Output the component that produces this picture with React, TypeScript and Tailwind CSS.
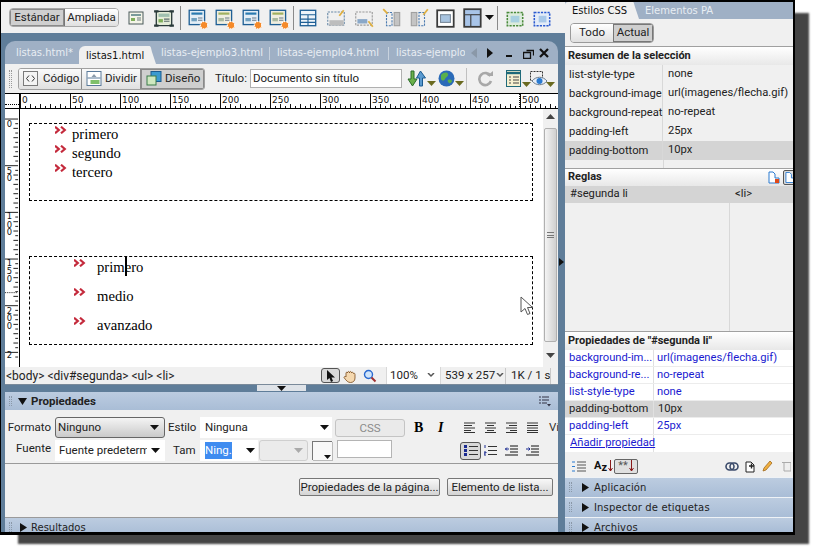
import type { ReactNode } from "react";

// dashed-outline icons used in the top toolbar
const Ico = ({ children, w = 20, h = 20 }: { children: ReactNode; w?: number; h?: number }) => (
  <svg width={w} height={h} viewBox="0 0 20 20" className="shrink-0">
    {children}
  </svg>
);

const Caret = ({ color = "#111" }: { color?: string }) => (
  <svg width="9" height="5" viewBox="0 0 9 5" className="shrink-0">
    <path d="M0 0h9L4.5 5z" fill={color} />
  </svg>
);

const ToolSep = () => <div className="h-[24px] w-px bg-[#8a8a8a] shrink-0" />;

const PageIcon = () => (
  <Ico>
    <rect x="3" y="4" width="14" height="12" fill="#f4f4e8" stroke="#4a5a5a" />
    <rect x="5" y="6" width="10" height="2" fill="#7a9a9a" />
    <rect x="5" y="10" width="4" height="3" fill="#7fae5a" />
    <path d="M11 10h4M11 12h4" stroke="#6a7a7a" />
  </Ico>
);

const FrameIcon = () => (
  <Ico w={22} h={22}>
    <path d="M3 4h14v13H3z" fill="#e4ecd8" stroke="#2a3a3a" strokeWidth="1.2" />
    <path d="M1 4h4M15 4h4M1 17h4M15 17h4" stroke="#2a3a3a" strokeWidth="2" />
    <path d="M5 6h10v3H5z" fill="#9fc0b0" />
    <path d="M5 11h4v3H5z" fill="#7fae5a" />
    <path d="M10 11h5M10 13h5" stroke="#5a6a6a" />
  </Ico>
);

const TemplateIcon = ({ v }: { v: number }) => (
  <Ico w={22} h={22}>
    <rect x="2" y="3" width="14" height="13" fill={v % 2 ? "#f0eee0" : "#e4eef6"} stroke="#1f5f95" strokeWidth="1.2" />
    <path d="M4 6h10" stroke={v % 2 ? "#a0b060" : "#2a7ab0"} strokeWidth="2" />
    <path d="M4 10h5v3H4z" fill={v % 2 ? "#a9b9a0" : "#70a0c0"} />
    <path d="M10 10h4M10 12h4" stroke="#6a7a8a" />
    <circle cx="15.5" cy="16.5" r="3.4" fill="#f58a2a" stroke="#fff" strokeWidth="1" strokeDasharray="1.6 .8" />
  </Ico>
);

const DashBox = ({ color = "#4a7ab0", children }: { color?: string; children?: ReactNode }) => (
  <Ico w={22} h={22}>
    <rect x="2.5" y="4.5" width="15" height="12" fill="none" stroke={color} strokeDasharray="2 1" />
    {children}
  </Ico>
);

const MainToolbar = () => (
  <div className="h-[31px] bg-[#f0f0f0] flex items-center pl-[8px] shrink-0">
    <div className="flex h-[19px] w-[110px] rounded-[4px] border border-[#a8a8a8] overflow-hidden text-[11.5px] shrink-0">
      <div className="w-[55px] bg-[#cfcfcf] border-r border-[#777] shadow-[inset_0_0_0_1px_#8a8a8a] flex items-center justify-center">Estándar</div>
      <div className="flex-1 bg-gradient-to-b from-white to-[#e0e0e0] flex items-center justify-center">Ampliada</div>
    </div>
    <div className="ml-[7px]"><PageIcon /></div>
    <div className="ml-[7px]"><FrameIcon /></div>
    <div className="ml-[5px]"><ToolSep /></div>
    <div className="ml-[6px] flex gap-[5px]">
      {[0, 1, 2, 3].map((v) => (
        <TemplateIcon key={v} v={v} />
      ))}
    </div>
    <div className="ml-[3px]"><ToolSep /></div>
    <div className="ml-[3px]">
      <Ico w={22} h={22}>
        <rect x="3" y="3" width="14" height="14" fill="#eef4fa" stroke="#1f5f95" strokeWidth="1.2" />
        <path d="M3 7h14M3 11h14M3 14h14M10 7v10" stroke="#1f5f95" />
      </Ico>
    </div>
    <div className="ml-[6px]">
      <DashBox color="#6a8aa8"><path d="M4 12h13v5H4z" fill="#bdbdbd" /><path d="M13 8l4-5" stroke="#e0b040" strokeWidth="1.6" /></DashBox>
    </div>
    <div className="ml-[6px]">
      <DashBox color="#9a9a9a"><path d="M4 11h9v4H4z" fill="#8aa8c8" /><path d="M14 13l4 5" stroke="#e0b040" strokeWidth="1.6" /></DashBox>
    </div>
    <div className="ml-[6px]">
      <Ico w={22} h={22}>
        <rect x="5" y="5" width="5" height="12" fill="none" stroke="#4a7ab0" strokeDasharray="2 1" />
        <rect x="12" y="5" width="5" height="12" fill="#c4c4c4" stroke="#a0a0a0" />
        <path d="M2 2l4 4" stroke="#e0b040" strokeWidth="1.6" />
      </Ico>
    </div>
    <div className="ml-[5px]">
      <Ico w={22} h={22}>
        <rect x="3" y="5" width="5" height="12" fill="#c4c4c4" stroke="#a0a0a0" />
        <rect x="10" y="5" width="5" height="12" fill="none" stroke="#4a7ab0" strokeDasharray="2 1" />
        <path d="M14 7l4-5" stroke="#e0b040" strokeWidth="1.6" />
      </Ico>
    </div>
    <div className="ml-[5px]">
      <Ico w={22} h={22}>
        <rect x="2" y="3" width="15" height="15" fill="#fff" stroke="#3a3a3a" strokeWidth="1.6" />
        <rect x="5" y="7" width="9" height="7" fill="#a8c4e0" stroke="#7a8a9a" />
      </Ico>
    </div>
    <div className="ml-[5px]">
      <Ico w={22} h={22}>
        <rect x="2" y="2" width="15" height="16" fill="#a8c4e8" stroke="#3a3a3a" strokeWidth="1.6" />
        <path d="M2 7h6v11" fill="none" stroke="#3a3a3a" />
        <path d="M8 7h9" stroke="#3a3a3a" />
      </Ico>
    </div>
    <div className="ml-[1px]"><Caret /></div>
    <div className="ml-[3px]"><ToolSep /></div>
    <div className="ml-[6px]">
      <Ico w={22} h={22}>
        <rect x="3" y="5" width="14" height="12" fill="#dcecdc" stroke="#4a8a3a" strokeDasharray="2 1" strokeWidth="1.4" />
        <rect x="6" y="8" width="8" height="6" fill="#a8d0e0" />
      </Ico>
    </div>
    <div className="ml-[5px]">
      <Ico w={22} h={22}>
        <rect x="3" y="5" width="14" height="12" fill="#e4ecf8" stroke="#2a5ad0" strokeDasharray="2 1" strokeWidth="1.4" />
        <rect x="7" y="8" width="7" height="6" fill="#a8c8e8" />
      </Ico>
    </div>
  </div>
);

const tabText = "font-['DejaVu_Sans',sans-serif] text-[10px] whitespace-nowrap shrink-0";

const DocTabs = () => (
  <div className="h-[23px] bg-[#9fb0c5] rounded-t-[10px] flex items-end shrink-0 overflow-hidden relative">
    <span className={tabText + " ml-[11px] mb-[4px] text-[#e8edf3] w-[63px]"}>listas.html*</span>
    <div className="w-[70px] h-[18px] bg-[#f0f0f0] rounded-tl-[6px] flex items-center pl-[7px] shrink-0">
      <span className={tabText + " text-[#111]"}>listas1.html</span>
    </div>
    <svg width="7" height="18" viewBox="0 0 7 18" className="shrink-0"><path d="M0 0c2 0 2 2 3 6l4 12H0z" fill="#f0f0f0" /></svg>
    <span className={tabText + " ml-[5px] mb-[4px] text-[#e8edf3] w-[108px]"}>listas-ejemplo3.html</span>
    <div className="w-px h-[13px] bg-[#c8d2de] mb-[4px] shrink-0" />
    <span className={tabText + " ml-[7px] mb-[4px] text-[#e8edf3] w-[111px]"}>listas-ejemplo4.html</span>
    <div className="w-px h-[13px] bg-[#c8d2de] mb-[4px] shrink-0" />
    <span className={tabText + " ml-[7px] mb-[4px] text-[#e8edf3] w-[69px] overflow-hidden"}>listas-ejemplo5.html</span>
    <div className="ml-[5px] mb-[3px] flex items-center h-[16px] shrink-0">
      <svg width="8" height="10" viewBox="0 0 8 10"><path d="M7 0v10L1 5z" fill="#8a98a8" /></svg>
      <svg width="8" height="10" viewBox="0 0 8 10" className="ml-[8px]"><path d="M1 0v10l6-5z" fill="#111" /></svg>
      <svg width="10" height="10" viewBox="0 0 10 10" className="ml-[10px]"><path d="M2 7h6v2H2z" fill="#111" /></svg>
      <svg width="11" height="11" viewBox="0 0 11 11" className="ml-[9px]">
        <path d="M3.5 2.5h7v5M.5 4.5h7v6h-7z" fill="none" stroke="#111" strokeWidth="1.3" />
      </svg>
      <svg width="10" height="10" viewBox="0 0 10 10" className="ml-[5px]"><path d="M1 1l8 8M9 1L1 9" stroke="#111" strokeWidth="2.2" /></svg>
    </div>
  </div>
);

const DocToolbar = () => (
  <div className="h-[29px] bg-[#f0f0f0] flex items-center shrink-0 relative">
    <div className="ml-[4px] w-[3px] h-[18px] border-x border-dotted border-[#9a9a9a] shrink-0" />
    <div className="ml-[6px] flex h-[22px] w-[187px] rounded-[3px] border border-[#a0a0a0] text-[11.5px] overflow-hidden shrink-0">
      <div className="w-[63px] bg-gradient-to-b from-[#fafafa] to-[#e0e0e0] border-r border-[#8a8a8a] flex items-center pl-[4px] gap-[5px] shrink-0">
        <svg width="15" height="15" viewBox="0 0 15 15" className="shrink-0">
          <rect x=".5" y=".5" width="14" height="14" fill="#f4f4f4" stroke="#7a7a7a" />
          <path d="M6 4.5L3.5 7.5 6 10.5M9 4.5l2.5 3-2.5 3" fill="none" stroke="#333" />
        </svg>
        Código
      </div>
      <div className="w-[59px] bg-gradient-to-b from-[#fafafa] to-[#e0e0e0] border-r border-[#8a8a8a] flex items-center pl-[4px] gap-[3px] shrink-0">
        <svg width="16" height="15" viewBox="0 0 15 15" className="shrink-0">
          <rect x=".5" y=".5" width="14" height="14" fill="#fff" stroke="#5a7a9a" />
          <path d="M1 7h13" stroke="#5a7a9a" />
          <path d="M5 6l2.5-3L10 6z" fill="#8a9aaa" />
          <path d="M4 9h9v4H4z" fill="#7fc06a" />
        </svg>
        Dividir
      </div>
      <div className="flex-1 bg-[#cfcfcf] shadow-[inset_0_0_0_1px_#8a8a8a] flex items-center pl-[5px] gap-[3px]">
        <svg width="16" height="15" viewBox="0 0 16 15" className="shrink-0">
          <rect x="5" y=".5" width="10" height="10" fill="#3a9ad0" stroke="#1a5a90" />
          <rect x="1" y="5" width="9" height="9" fill="#cfe8c0" stroke="#3a7a4a" />
        </svg>
        Diseño
      </div>
    </div>
    <span className="ml-[10px] text-[11.5px] w-[35px] shrink-0">Título:</span>
    <div className="w-[152px] h-[19px] bg-white border border-[#b0b0b0] text-[11.5px] leading-[17px] pl-[2px] shrink-0">Documento sin título</div>
    <div className="ml-[5px] w-[22px] flex items-center shrink-0">
      <svg width="19" height="17" viewBox="0 0 19 17">
        <path d="M5.5 16L1 9h3V1h3v8h3z" fill="#6ab04a" stroke="#2a6a2a" />
        <path d="M13.5 1L9.5 8h3v8h3V8h3z" fill="#5a9ad0" stroke="#1a5a90" />
      </svg>
    </div>
    <div className="mt-[10px] -ml-[2px]"><Caret color="#6a6a20" /></div>
    <div className="ml-[2px] flex items-center shrink-0">
      <svg width="17" height="17" viewBox="0 0 17 17">
        <circle cx="8.5" cy="8.5" r="8" fill="#2a6ab8" />
        <path d="M3 5c3-3 6-3 7-1s-2 3-3 5-3 2-4 0zM10 10c2-1 4 0 4 1s-2 3-3 2-2-2-1-3z" fill="#5ab04a" />
      </svg>
    </div>
    <div className="mt-[10px]"><Caret color="#6a6a20" /></div>
    <div className="ml-[2px] w-px h-[22px] bg-[#c0c0c0] shrink-0" />
    <svg width="17" height="17" viewBox="0 0 17 17" className="ml-[10px] shrink-0">
      <path d="M13.5 6A6 6 0 1 0 14 11" fill="none" stroke="#a8a8a8" strokeWidth="2.6" />
      <path d="M10 6h6V1z" fill="#a8a8a8" />
    </svg>
    <svg width="17" height="18" viewBox="0 0 17 18" className="ml-[12px] shrink-0">
      <rect x=".5" y=".5" width="14" height="16" fill="#f6f0d0" stroke="#1f6a7a" />
      <path d="M1 3h13" stroke="#1f6a7a" strokeWidth="2.4" />
      <path d="M3 7h2M7 7h6M3 10h2M7 10h6M3 13h2M7 13h6" stroke="#444" />
    </svg>
    <div className="mt-[12px] -ml-[1px]"><Caret color="#6a6a20" /></div>
    <svg width="20" height="18" viewBox="0 0 20 18" className="-ml-[2px] shrink-0">
      <rect x="1.5" y="1.5" width="12" height="9" fill="none" stroke="#333" strokeDasharray="2 1" />
      <path d="M3 11c4-5 11-5 15 0-4 5-11 5-15 0z" fill="#e8eef6" stroke="#6a7a8a" />
      <circle cx="10.5" cy="11" r="3" fill="#2a7ad0" />
    </svg>
    <div className="mt-[12px] -ml-[3px]"><Caret color="#6a6a20" /></div>
  </div>
);

const HRuler = () => {
  const ticks = Array.from({ length: 108 }, (_, i) => i * 5);
  return (
    <div className="h-[16px] bg-white border-y border-black flex shrink-0 overflow-hidden">
      <div className="w-[15px] h-full border-r border-black relative shrink-0">
        <div className="absolute left-0 right-0 bottom-[3px] border-b border-dotted border-black" />
      </div>
      <svg width="538" height="14" viewBox="0 0 538 14" className="shrink-0">
        {ticks.map((t) => {
          const h = t % 50 === 0 ? 14 : t % 10 === 0 ? 4 : 2;
          return <path key={t} d={`M${t + 0.5} ${14 - h}V14`} stroke="#111" />;
        })}
        <path d="M499.5 0V14" stroke="#111" strokeDasharray="1 1" />
        {[0, 50, 100, 150, 200, 250, 300, 350, 400, 450, 500].map((n) => (
          <text key={n} x={n + 2} y="9" fontSize="9" fontFamily="DejaVu Sans, sans-serif" fill="#111">
            {n}
          </text>
        ))}
      </svg>
    </div>
  );
};

const VRuler = () => {
  const ticks = Array.from({ length: 52 }, (_, i) => i * 5);
  const labels: [string, number][] = [
    ["0", 10], ["5", 60], ["0", 68], ["1", 109], ["0", 118], ["0", 126], ["1", 159], ["5", 168], ["0", 176],
    ["2", 210], ["0", 218], ["0", 227], ["2", 258],
  ];
  return (
    <svg width="15" height="259" viewBox="0 0 15 259" className="shrink-0 bg-white border-r border-black">
      {ticks.map((t) => {
        const w = t % 50 === 0 ? 14 : t % 10 === 0 ? 5 : 3;
        return <path key={t} d={`M${14 - w} ${t + 1.5}H14`} stroke="#111" />;
      })}
      <path d="M0 187.5H14" stroke="#fff" />
      <path d="M0 187.5H14" stroke="#111" strokeDasharray="1 1" />
      {labels.map(([s, y], i) => (
        <text key={i} x="2" y={y} fontSize="9" fontFamily="DejaVu Sans, sans-serif" fill="#111">
          {s}
        </text>
      ))}
    </svg>
  );
};

const Chevrons = () => (
  <svg width="12" height="8" viewBox="0 0 11 7" className="shrink-0">
    <path d="M0 .5l3.5 3L0 6.5M5.5 .5l3.5 3-3.5 3" fill="none" stroke="#c42a3c" strokeWidth="2" />
  </svg>
);

const Canvas = () => (
  <div className="flex-1 bg-white relative font-['Liberation_Serif',serif] text-[14.67px] text-black overflow-hidden">
    <div className="ml-[9px] mt-[14px] h-[78px] w-[504px] border border-dashed border-black pt-[1px]">
      <ul className="pl-[42px]">
        {["primero", "segundo", "tercero"].map((t) => (
          <li key={t} className="relative leading-[19px]">
            <span className="absolute top-[1px] -left-[17px]"><Chevrons /></span>
            {t}
          </li>
        ))}
      </ul>
    </div>
    <div className="ml-[9px] mt-[55px] h-[89px] w-[504px] border border-dashed border-black relative pt-[1px]">
      <ul className="pl-[67px]">
        {["primero", "medio", "avanzado"].map((t) => (
          <li key={t} className="relative leading-[19px] pb-[10px]">
            <span className="absolute top-[1px] -left-[23px]"><Chevrons /></span>
            {t}
          </li>
        ))}
      </ul>
      <div className="absolute left-[95px] top-0 w-[2px] h-[19px] bg-black" />
    </div>
    <svg width="14" height="20" viewBox="0 0 14 20" className="absolute left-[500px] top-[187px]">
      <path d="M1 1v15l4-3.5 2.5 6 2.5-1-2.5-6h5z" fill="#fff" stroke="#555" />
    </svg>
  </div>
);

const Scrollbar = () => (
  <div className="w-[15px] bg-[#f0f0f0] flex flex-col items-center shrink-0">
    <svg width="9" height="5" viewBox="0 0 9 5" className="mt-[5px]"><path d="M0 5h9L4.5 0z" fill="#444" /></svg>
    <div className="mt-[9px] h-[214px] w-[13px] rounded-[2px] bg-gradient-to-r from-[#f4f4f4] to-[#cfcfcf] border border-[#b0b0b0] flex items-center justify-center">
      <div className="w-[7px] h-[6px] border-y border-[#777] relative">
        <div className="absolute left-0 right-0 top-[1.5px] border-t border-[#777]" />
      </div>
    </div>
    <svg width="9" height="5" viewBox="0 0 9 5" className="mt-[11px]"><path d="M0 0h9L4.5 5z" fill="#444" /></svg>
  </div>
);

const StatusBar = () => (
  <div className="h-[17px] bg-[#f0f0f0] flex items-center text-[12px] shrink-0 text-[#222]">
    <span className="ml-[1px]">{"<body> <div#segunda> <ul> <li>"}</span>
    <div className="ml-auto flex items-center text-[11.5px]">
      <div className="w-[19px] h-[15px] border border-[#555] rounded-[3px] bg-[#d8d8d8] flex items-center justify-center">
        <svg width="9" height="12" viewBox="0 0 9 12"><path d="M1 0v10l2.5-2 1.5 4 2-1-1.5-3.5H9z" fill="#111" /></svg>
      </div>
      <svg width="14" height="14" viewBox="0 0 14 14" className="ml-[3px]">
        <path d="M3 8V4c0-1 1.5-1 1.5 0 0-2 2-2 2 0 0-2 2-2 2 0 0-1 2-1 2 .5 1-.5 1.5 0 1.5 1V9c0 3-2 4.5-4.5 4.5S3.5 12 1 8.5c0-1 1.5-1.5 2-.5z" fill="#f4d8b0" stroke="#7a4a1a" strokeWidth=".8" />
      </svg>
      <svg width="14" height="14" viewBox="0 0 14 14" className="ml-[6px]">
        <circle cx="5.5" cy="5.5" r="4" fill="#cfe4fa" stroke="#2a6ad0" strokeWidth="1.4" />
        <path d="M8.5 8.5l4 4" stroke="#a03030" strokeWidth="2" />
      </svg>
      <div className="ml-[9px] w-[55px] h-[17px] bg-white border-x border-[#d8d8d8] flex items-center pl-[3px] justify-between pr-[5px]">
        100%
        <svg width="8" height="5" viewBox="0 0 8 5"><path d="M1 0l3 3 3-3" fill="none" stroke="#555" strokeWidth="1.5" /></svg>
      </div>
      <div className="ml-[4px] w-[60px] flex items-center gap-[1px] whitespace-nowrap">
        539 x 257
        <svg width="8" height="5" viewBox="0 0 8 5"><path d="M1 0l3 3 3-3" fill="none" stroke="#555" strokeWidth="1.5" /></svg>
      </div>
      <div className="h-[16px] w-px bg-[#c8c8c8]" />
      <span className="ml-[5px] w-[39px] whitespace-nowrap">1K / 1 s</span>
      <div className="h-[16px] w-px bg-[#c8c8c8]" />
      <div className="w-[7px]" />
    </div>
  </div>
);

const Grip = () => <div className="w-[3px] h-[10px] border-x border-dotted border-[#8a98a8] shrink-0" />;

const Tri = () => (
  <svg width="7" height="9" viewBox="0 0 7 9" className="shrink-0"><path d="M0 0l7 4.5L0 9z" fill="#111" /></svg>
);

const TriDown = () => (
  <svg width="9" height="7" viewBox="0 0 9 7" className="shrink-0"><path d="M0 0h9L4.5 7z" fill="#111" /></svg>
);

const panelHead = "bg-gradient-to-b from-[#bccce0] to-[#a9bdd6]";
const fieldSel = "h-[21px] bg-white flex items-center justify-between text-[11.5px] shrink-0";

const PropsPanel = () => (
  <div className="flex-1 flex flex-col bg-[#f0f0f0] min-h-0 overflow-hidden">
    <div className={"h-[18px] flex items-center pl-[4px] shrink-0 " + panelHead}>
      <Grip />
      <div className="ml-[6px]"><TriDown /></div>
      <span className="ml-[4px] font-bold text-[11.5px] relative top-[1px]">Propiedades</span>
      <svg width="12" height="11" viewBox="0 0 12 11" className="ml-auto mr-[7px]">
        <path d="M0 1h2M0 4h2M0 7h2M3 1h7M3 4h7M3 7h5" stroke="#334" />
        <path d="M8 8h4l-2 2.5z" fill="#334" />
      </svg>
    </div>
    <div className="h-[54px] border-b border-[#9a9a9a] shrink-0 pt-[7px] text-[11.5px] overflow-hidden">
      <div className="flex items-center h-[21px] whitespace-nowrap">
        <span className="w-[46px] text-right shrink-0">Formato</span>
        <div className="ml-[4px] w-[110px] h-[21px] rounded-[3px] border border-[#666] bg-gradient-to-b from-[#f4f4f4] to-[#cacaca] pl-[2px] pr-[5px] flex items-center justify-between shrink-0">
          Ninguno<Caret />
        </div>
        <span className="ml-[3px] w-[32px] shrink-0">Estilo</span>
        <div className={fieldSel + " w-[132px] pl-[5px] pr-[3px]"}>Ninguna<Caret /></div>
        <div className="ml-[3px] w-[70px] h-[18px] rounded-[3px] border border-[#c4c4c4] bg-[#eaeaea] text-[#8a8a8a] text-center leading-[16px] shrink-0">CSS</div>
        <span className="ml-[9px] font-['Liberation_Serif',serif] font-bold text-[14px] w-[24px] shrink-0 text-black">B</span>
        <span className="font-['Liberation_Serif',serif] font-bold italic text-[14px] w-[26px] shrink-0 text-black">I</span>
        {["l", "c", "r", "j"].map((a) => (
          <svg key={a} width="11" height="11" viewBox="0 0 11 11" className="mr-[10px] shrink-0">
            <path
              d={
                a === "l" ? "M0 1h11M0 3.5h8M0 6h11M0 8.5h7M0 10.5h11"
                : a === "c" ? "M0 1h11M2 3.5h7M0 6h11M2 8.5h7M0 10.5h11"
                : a === "r" ? "M0 1h11M3 3.5h8M0 6h11M4 8.5h7M0 10.5h11"
                : "M0 1h11M0 3.5h11M0 6h11M0 8.5h11M0 10.5h11"
              }
              stroke="#333"
            />
          </svg>
        ))}
        <span className="ml-[1px] text-[#333]">Vín</span>
      </div>
      <div className="flex items-center h-[21px] mt-[2px] whitespace-nowrap">
        <span className="w-[46px] text-right shrink-0 relative -top-[2px]">Fuente</span>
        <div className={fieldSel + " ml-[4px] w-[110px] pl-[4px] pr-[5px] overflow-hidden"}>
          <span className="w-[88px] overflow-hidden">Fuente predeterminada</span><Caret />
        </div>
        <span className="ml-[8px] w-[27px] shrink-0">Tam</span>
        <div className={fieldSel + " w-[58px] pl-[5px] pr-[3px]"}>
          <span className="bg-[#3f8cf0] text-white">Ning.</span><Caret />
        </div>
        <div className="ml-[1px] w-[49px] h-[21px] rounded-[3px] border border-[#cfcfcf] bg-[#ebebeb] flex items-center justify-end pr-[4px] shrink-0"><Caret color="#aaa" /></div>
        <div className="ml-[4px] w-[20px] h-[19px] bg-[#f8f8f8] border-l border-t border-[#777] shadow-[1px_1px_0_#bbb] relative shrink-0">
          <svg width="7" height="4" viewBox="0 0 9 5" className="absolute right-[1px] bottom-[1px]"><path d="M0 0h9L4.5 5z" fill="#111" /></svg>
        </div>
        <div className="ml-[5px] w-[55px] h-[18px] bg-white border border-[#b4b4b4] -mt-[4px] shrink-0" />
        <div className="ml-[68px] w-[21px] h-[18px] rounded-[3px] border border-[#555] bg-[#d8d8d8] flex items-center justify-center shrink-0">
          <svg width="14" height="11" viewBox="0 0 14 11"><path d="M0 0h3v3H0zM0 4h3v3H0zM0 8h3v3H0z" fill="#1a2a90" /><path d="M5 1.5h9M5 5.5h9M5 9.5h9" stroke="#333" /></svg>
        </div>
        <svg width="13" height="11" viewBox="0 0 13 11" className="ml-[3px] shrink-0"><path d="M4 1.5h9M4 5.5h9M4 9.5h9" stroke="#333" /><path d="M1 0v3M0 7h2v1H0v2h2" stroke="#1a2a90" fill="none" /></svg>
        <svg width="13" height="11" viewBox="0 0 13 11" className="ml-[8px] shrink-0"><path d="M5 1h8M5 4h8M5 7h8M0 10h13" stroke="#111" /><path d="M4 4H0M2 2.5L.5 4 2 5.5" stroke="#1a2a90" fill="none" /></svg>
        <svg width="13" height="11" viewBox="0 0 13 11" className="ml-[8px] shrink-0"><path d="M5 1h8M5 4h8M5 7h8M0 10h13" stroke="#111" /><path d="M0 4h4M2.5 2.5L4 4 2.5 5.5" stroke="#1a2a90" fill="none" /></svg>
      </div>
    </div>
    <div className="h-[54px] border-b border-[#9a9a9a] shrink-0 flex justify-end items-start pt-[14px] pr-[5px] gap-[7px]">
      <div className="w-[141px] h-[18px] rounded-[2px] border border-[#777] bg-gradient-to-b from-[#f8f8f8] to-[#d4d4d4] text-center text-[11.5px] leading-[16px] whitespace-nowrap">Propiedades de la página...</div>
      <div className="w-[106px] h-[18px] rounded-[2px] border border-[#777] bg-gradient-to-b from-[#f8f8f8] to-[#d4d4d4] text-center text-[11.5px] leading-[16px] whitespace-nowrap">Elemento de lista...</div>
    </div>
    <div className={"flex-1 flex items-start pt-[2px] pl-[4px] " + panelHead}>
      <div className="mt-[2px]"><Grip /></div>
      <div className="ml-[8px] mt-[3px]"><Tri /></div>
      <span className="ml-[4px] font-['DejaVu_Sans',sans-serif] text-[10px]">Resultados</span>
    </div>
  </div>
);

const Row = ({ k, v, hl }: { k: string; v: string; hl?: boolean }) => (
  <div className={"h-[19px] flex items-center text-[11.2px] " + (hl ? "bg-[#d4d4d4]" : "")}>
    <span className="w-[98px] pl-[4px] border-r border-[#d8d8d8] h-full leading-[19px] shrink-0 whitespace-nowrap">{k}</span>
    <span className="pl-[5px] whitespace-nowrap">{v}</span>
  </div>
);

const Prop = ({ k, v, hl }: { k: string; v: string; hl?: boolean }) => (
  <div className={"h-[17px] flex text-[11.2px] leading-[16px] border-b border-[#ececec] shrink-0 " + (hl ? "bg-[#d4d4d4] text-[#222]" : "bg-white text-[#1a1ad0]")}>
    <span className="w-[89px] pl-[4px] border-r border-[#e0e0e0] shrink-0 whitespace-nowrap">{k}</span>
    <span className={(hl ? "pl-[4px]" : "pl-[3px]") + " whitespace-nowrap"}>{v}</span>
  </div>
);

const Collapsed = ({ label, h }: { label: string; h: string }) => (
  <div className={"flex items-start pt-[2px] pl-[4px] border-t border-[#eef2f6] font-['DejaVu_Sans',sans-serif] text-[10px] shrink-0 " + panelHead + " " + h}>
    <div className="mt-[2px]"><Grip /></div>
    <div className="ml-[10px] mt-[3px]"><Tri /></div>
    <span className="ml-[5px] tracking-[.15px]">{label}</span>
  </div>
);

const SidePanel = () => (
  <div className="w-[228px] bg-[#f0f0f0] flex flex-col shrink-0 overflow-hidden text-[#222]">
    <div className="h-[17px] bg-[#9fb0c5] flex items-center shrink-0 font-['DejaVu_Sans',sans-serif] text-[10px]">
      <div className="w-[68px] h-full bg-[#f0f0f0] rounded-tl-[3px] flex items-center pl-[7px] text-[#111] shrink-0">Estilos CSS</div>
      <svg width="6" height="17" viewBox="0 0 6 17" className="shrink-0"><path d="M0 0c1 0 1 2 2 5l4 12H0z" fill="#f0f0f0" /></svg>
      <span className="ml-[6px] text-[#e8edf3] whitespace-nowrap">Elementos PA</span>
    </div>
    <div className="h-[28px] flex items-center pl-[5px] shrink-0 border-b border-[#a0a0a0]">
      <div className="flex w-[84px] h-[20px] rounded-[4px] border border-[#9a9a9a] text-[11.5px] overflow-hidden">
        <div className="w-[42px] bg-gradient-to-b from-white to-[#e0e0e0] flex items-center justify-center">Todo</div>
        <div className="flex-1 bg-[#cfcfcf] shadow-[inset_0_0_0_1px_#777] flex items-center justify-center">Actual</div>
      </div>
    </div>
    <div className="h-[18px] bg-gradient-to-b from-white to-[#e8e8e8] font-bold text-[11px] leading-[17px] pl-[3px] shrink-0">Resumen de la selección</div>
    <div className="h-[104px] border-b border-[#a0a0a0] shrink-0 relative">
      <Row k="list-style-type" v="none" />
      <Row k="background-image" v="url(imagenes/flecha.gif)" />
      <Row k="background-repeat" v="no-repeat" />
      <Row k="padding-left" v="25px" />
      <Row k="padding-bottom" v="10px" hl />
      <div className="absolute left-[98px] top-[95px] bottom-0 w-px bg-[#d8d8d8]" />
    </div>
    <div className="h-[17px] bg-gradient-to-b from-white to-[#e8e8e8] font-bold text-[11px] leading-[16px] pl-[3px] flex shrink-0">
      Reglas
      <div className="ml-auto flex items-center gap-[3px] -mr-[4px]">
        <svg width="12" height="13" viewBox="0 0 12 13"><path d="M1 1h4l2 2v4h4v5H1z" fill="#fff" stroke="#2a7ad0" /><rect x="7" y="8" width="4" height="4" fill="#e04a1a" /></svg>
        <div className="w-[14px] h-[15px] border border-[#555] rounded-[2px] bg-[#dcdcdc] flex items-center pl-[1px]">
          <svg width="12" height="13" viewBox="0 0 12 13"><path d="M1 1h4l2 2v4h4v5H1z" fill="#fff" stroke="#2a7ad0" /></svg>
        </div>
      </div>
    </div>
    <div className="h-[17px] bg-[#d4d4d4] flex text-[11.2px] leading-[16px] shrink-0">
      <span className="w-[164px] pl-[5px]">#segunda li</span>
      <span className="pl-[6px]">{"<li>"}</span>
    </div>
    <div className="flex-1 min-h-0 border-b border-[#a0a0a0] relative">
      <div className="absolute left-[164px] top-0 bottom-0 w-px bg-[#d8d8d8]" />
    </div>
    <div className="h-[18px] bg-gradient-to-b from-white to-[#e8e8e8] font-bold text-[11px] leading-[17px] pl-[3px] shrink-0">{'Propiedades de "#segunda li"'}</div>
    <Prop k="background-im..." v="url(imagenes/flecha.gif)" />
    <Prop k="background-re..." v="no-repeat" />
    <Prop k="list-style-type" v="none" />
    <Prop k="padding-bottom" v="10px" hl />
    <Prop k="padding-left" v="25px" />
    <div className="h-[17px] flex bg-white text-[11.2px] leading-[16px] text-[#1a1ad0] underline shrink-0">
      <span className="w-[89px] pl-[5px] border-r border-[#e0e0e0] whitespace-nowrap">Añadir propiedad</span>
    </div>
    <div className="h-[25px] flex items-center shrink-0 pl-[6px] pt-[3px] relative">
      <svg width="16" height="11" viewBox="0 0 16 11" className="shrink-0"><path d="M1 1h3M1 5.5h3M1 10h3" stroke="#2a7ad0" /><path d="M6 1h9M6 4h9M6 7h9M6 10h9" stroke="#555" /></svg>
      <span className="ml-[7px] font-bold text-[11px] text-[#111] flex w-[14px] shrink-0">A<span className="relative top-[2px]">z</span></span>
      <svg width="5" height="12" viewBox="0 0 5 12" className="shrink-0"><path d="M2.5 0v11M.5 8l2 3 2-3" stroke="#8a1a1a" fill="none" /></svg>
      <div className="ml-[1px] w-[24px] h-[15px] border border-[#666] rounded-[2px] bg-[#e0e0e0] flex items-center justify-center text-[11px] text-[#555] shrink-0">
        **
        <svg width="5" height="12" viewBox="0 0 5 12" className="ml-[1px]"><path d="M2.5 0v11M.5 8l2 3 2-3" stroke="#8a1a1a" fill="none" /></svg>
      </div>
      <svg width="14" height="9" viewBox="0 0 14 9" className="ml-[87px] shrink-0">
        <rect x="1" y="1" width="8" height="7" rx="3.5" fill="none" stroke="#3a4a6a" strokeWidth="1.6" />
        <rect x="5" y="1" width="8" height="7" rx="3.5" fill="none" stroke="#3a4a6a" strokeWidth="1.6" />
      </svg>
      <svg width="12" height="13" viewBox="0 0 12 13" className="ml-[5px] shrink-0"><path d="M2 2h5l3 3v7H2z" fill="#fff" stroke="#222" /><path d="M5 6h5M7.5 3.5v5" stroke="#222" strokeWidth="1.4" /></svg>
      <svg width="11" height="12" viewBox="0 0 11 12" className="ml-[6px] shrink-0"><path d="M8 1l2 2-6 7-3 1 1-3z" fill="#f0b040" stroke="#a06a20" strokeWidth=".8" /></svg>
      <svg width="10" height="12" viewBox="0 0 10 12" className="ml-[8px] shrink-0"><path d="M1 2.5h10M3 3v8h7V3" fill="#eee" stroke="#aaa" /></svg>
    </div>
    <Collapsed label="Aplicación" h="h-[20px]" />
    <Collapsed label="Inspector de etiquetas" h="h-[20px]" />
    <Collapsed label="Archivos" h="h-[15px]" />
  </div>
);

export default function App() {
  return (
    <div className="w-[820px] h-[558px] bg-white overflow-hidden font-['Roboto',Arial,sans-serif] text-[#222]">
      <div className="w-[795px] h-[535px] border-l border-t-2 border-r-2 border-b-[3px] border-black flex shadow-[16px_11px_2px_-2px_#444]">
        <div className="flex-1 flex flex-col min-w-0 bg-[#5f7d99]">
          <MainToolbar />
          <div className="flex-1 flex min-h-0">
            <div className="w-[553px] ml-[4px] flex flex-col shrink-0">
              <div className="h-[8px] shrink-0" />
              <div className="h-[344px] flex flex-col shrink-0 border-b border-[#7a8a9a]">
                <DocTabs />
                <DocToolbar />
                <HRuler />
                <div className="flex-1 flex min-h-0 overflow-hidden">
                  <VRuler />
                  <Canvas />
                  <Scrollbar />
                </div>
                <StatusBar />
              </div>
              <div className="h-[7px] flex justify-center shrink-0">
                <div className="w-[49px] h-[6px] bg-[#dfe3e8] flex justify-center pt-[1px]">
                  <Caret />
                </div>
              </div>
              <PropsPanel />
            </div>
            <div className="flex-1 flex items-center justify-center pb-[41px]">
              <svg width="5" height="8" viewBox="0 0 5 8"><path d="M0 0l5 4-5 4z" fill="#111" /></svg>
            </div>
          </div>
        </div>
        <SidePanel />
      </div>
    </div>
  );
}
